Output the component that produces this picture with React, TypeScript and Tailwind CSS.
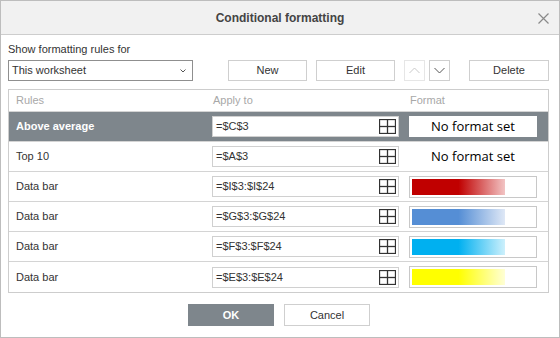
import type { FC } from "react";

const RULES = [
  { name: "Above average", range: "=$C$3", format: "none" },
  { name: "Top 10", range: "=$A$3", format: "none" },
  { name: "Data bar", range: "=$I$3:$I$24", format: "red" },
  { name: "Data bar", range: "=$G$3:$G$24", format: "blue" },
  { name: "Data bar", range: "=$F$3:$F$24", format: "cyan" },
  { name: "Data bar", range: "=$E$3:$E$24", format: "yellow" },
];

const BAR_CLASSES: Record<string, string> = {
  red: "bg-[linear-gradient(to_right,#c00000_0%,#c00000_50%,#f2c4c4_100%)]",
  blue: "bg-[linear-gradient(to_right,#558ed5_0%,#558ed5_50%,#dfe8f6_100%)]",
  cyan: "bg-[linear-gradient(to_right,#00b0f0_0%,#00b0f0_50%,#cdf0fc_100%)]",
  yellow: "bg-[linear-gradient(to_right,#ffff00_0%,#ffff00_50%,#ffffd6_100%)]",
};

const GridIcon: FC = () => (
  <svg width="17" height="15" viewBox="0 0 17 15" className="shrink-0">
    <rect x="0.5" y="0.5" width="16" height="14" fill="none" stroke="#333" strokeWidth="1.3" />
    <line x1="8.5" y1="0.5" x2="8.5" y2="14.5" stroke="#333" strokeWidth="1.3" />
    <line x1="0.5" y1="7.5" x2="16.5" y2="7.5" stroke="#333" strokeWidth="1.3" />
  </svg>
);

const Button: FC<{ label: string; className: string }> = ({ label, className }) => (
  <button className={`h-[21px] border border-[#cfcfcf] bg-white text-[11px] text-[#333] ${className}`}>
    {label}
  </button>
);

export default function App() {
  return (
    <div className="flex h-[338px] w-[560px] flex-col border border-[#bdbdbd] bg-white font-['Liberation_Sans',Arial,sans-serif] text-[#333]">
      <div className="relative flex h-[34px] shrink-0 items-center justify-center border-b border-[#cdcdcd] bg-[#f1f1f1]">
        <span className="text-[12px] font-bold text-[#444]">Conditional formatting</span>
        <svg width="11" height="11" viewBox="0 0 11 11" className="absolute right-[10px] top-[12px]">
          <path d="M0.5 0.5 L10.5 10.5 M10.5 0.5 L0.5 10.5" stroke="#8a8a8a" strokeWidth="1.2" />
        </svg>
      </div>

      <div className="px-[7px] pt-[7px]">
        <div className="text-[11px] leading-[14px]">Show formatting rules for</div>
        <div className="mt-[4px] flex items-center">
          <div className="flex h-[21px] w-[185px] items-center justify-between border border-[#8f8f8f] pl-[3px] pr-[6px] text-[11px]">
            <span>This worksheet</span>
            <svg width="6" height="4" viewBox="0 0 6 4">
              <path d="M0.5 0.5 L3 3 L5.5 0.5" fill="none" stroke="#555" strokeWidth="1" />
            </svg>
          </div>
          <Button label="New" className="ml-[35px] w-[79px]" />
          <Button label="Edit" className="ml-[9px] w-[79px]" />
          <div className="ml-[9px] flex h-[21px] w-[21px] items-center justify-center border border-[#e6e6e6]">
            <svg width="11" height="7" viewBox="0 0 11 7">
              <path d="M0.5 6 L5.5 1 L10.5 6" fill="none" stroke="#c9c9c9" strokeWidth="1" />
            </svg>
          </div>
          <div className="ml-[4px] flex h-[21px] w-[21px] items-center justify-center border border-[#cfcfcf]">
            <svg width="11" height="7" viewBox="0 0 11 7">
              <path d="M0.5 1 L5.5 6 L10.5 1" fill="none" stroke="#555" strokeWidth="1" />
            </svg>
          </div>
          <Button label="Delete" className="ml-[19px] w-[80px]" />
        </div>

        <div className="mt-[8px] w-[541px] border border-[#cdcdcd]">
          <div className="flex h-[22px] items-center border-b border-[#d4d4d4] text-[11px] text-[#a8a8a8]">
            <div className="w-[204px] pl-[7px]">Rules</div>
            <div className="w-[197px]">Apply to</div>
            <div>Format</div>
          </div>
          {RULES.map((rule, idx) => {
            const selected = idx === 0;
            return (
              <div
                key={idx}
                className={`flex h-[30px] items-center text-[11px] ${
                  idx < RULES.length - 1 ? "border-b border-[#d4d4d4]" : ""
                } ${selected ? "bg-[#7e868c] font-bold text-white" : ""}`}
              >
                <div className="w-[203px] pl-[7px]">{rule.name}</div>
                <div className="flex h-[21px] w-[187px] items-center justify-between border border-[#d0d0d0] bg-white pl-[3px] pr-[2px] font-normal text-[#333]">
                  <span>{rule.range}</span>
                  <GridIcon />
                </div>
                {rule.format === "none" ? (
                  <div
                    className={`ml-[10px] flex h-[21px] w-[128px] items-center justify-center font-['Open_Sans',sans-serif] text-[13px] font-normal text-black ${
                      selected ? "bg-white" : ""
                    }`}
                  >
                    No format set
                  </div>
                ) : (
                  <div className="ml-[10px] h-[22px] w-[128px] border border-[#c8c8c8] bg-white p-[2px]">
                    <div className={`h-full w-[93px] ${BAR_CLASSES[rule.format]}`} />
                  </div>
                )}
              </div>
            );
          })}
        </div>
      </div>

      <div className="mt-auto mb-[11px] flex justify-center gap-[10px] pr-[2px]">
        <button className="h-[22px] w-[86px] bg-[#7e868c] text-[11px] font-bold text-white">OK</button>
        <button className="h-[22px] w-[86px] border border-[#cfcfcf] bg-white text-[11px] text-[#333]">Cancel</button>
      </div>
    </div>
  );
}
